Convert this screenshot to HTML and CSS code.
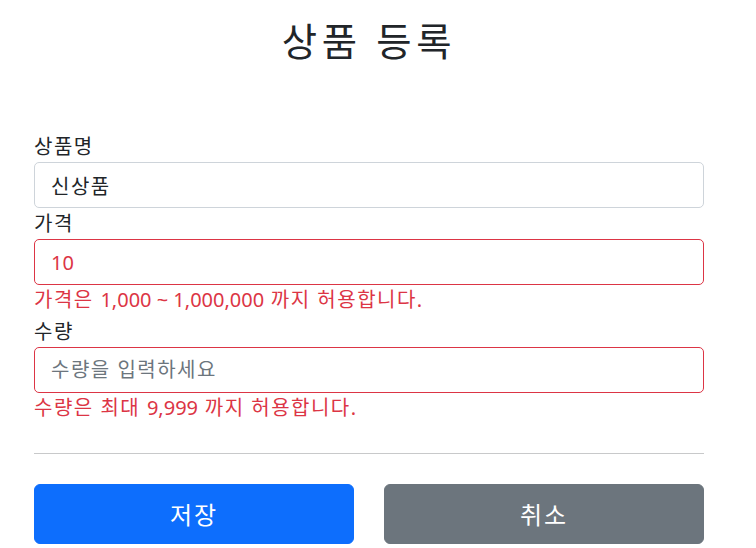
FILE: index.html
```html
<!DOCTYPE html>
<html lang="ko">
<head>
<meta charset="utf-8">
<title>상품 등록</title>
<link rel="stylesheet" href="styles.css">
</head>
<body>
<div class="container">
  <div class="header">
    <h2 class="title">상품 등록</h2>
  </div>
  <form class="form">
    <div class="field">
      <label class="label" for="itemName">상품명</label>
      <input type="text" id="itemName" class="control" value="신상품">
    </div>
    <div class="field">
      <label class="label" for="price">가격</label>
      <input type="text" id="price" class="control control-error control-number" value="10">
      <div class="field-error">가격은 <span class="num">1,000 ~ 1,000,000</span> 까지 허용합니다.</div>
    </div>
    <div class="field">
      <label class="label" for="quantity">수량</label>
      <input type="text" id="quantity" class="control control-error" placeholder="수량을 입력하세요">
      <div class="field-error">수량은 최대 <span class="num">9,999</span> 까지 허용합니다.</div>
    </div>
    <hr class="divider">
    <div class="actions">
      <button type="submit" class="btn btn-primary">저장</button>
      <button type="button" class="btn btn-secondary">취소</button>
    </div>
  </form>
</div>
</body>
</html>
```
FILE: styles.css
```css
html, body {
  margin: 0;
  padding: 0;
  background: #ffffff;
}
body {
  font-family: "Noto Sans", "Noto Sans CJK KR", sans-serif;
  font-size: 20px;
  color: #212529;
  letter-spacing: 1.5px;
}
.container {
  width: 670px;
  margin: 0 0 0 34px;
}
.header {
  padding: 18px 0 57.6px;
  text-align: center;
}
.title {
  margin: 0 0 9.6px;
  font-size: 38.4px;
  line-height: 46px;
  font-weight: 400;
  letter-spacing: 4.6px;
  color: #212529;
}
.form {
  display: flex;
  flex-direction: column;
}
.field {
  display: flex;
  flex-direction: column;
}
.label {
  display: block;
  line-height: 31px;
  height: 31px;
}
.control {
  box-sizing: border-box;
  width: 100%;
  height: 46px;
  margin: 0;
  padding: 0 16px;
  font-family: inherit;
  font-size: 20px;
  letter-spacing: 1.5px;
  color: #212529;
  background: #ffffff;
  border: 1px solid #ced4da;
  border-radius: 5px;
  outline: none;
}
.control-error {
  border-color: #dc3545;
  color: #dc3545;
}
.control-number {
  letter-spacing: 0;
}
.control::placeholder {
  color: #6c757d;
  opacity: 1;
}
.field-error {
  color: #dc3545;
  line-height: 30.5px;
  height: 30.5px;
}
.num {
  letter-spacing: 0;
}
.divider {
  margin: 30.3px 0 29.7px;
  border: 0;
  border-top: 1px solid #c8c9ca;
  height: 0;
}
.actions {
  display: grid;
  grid-template-columns: 1fr 1fr;
  column-gap: 30px;
}
.btn {
  height: 59.5px;
  font-family: inherit;
  font-size: 24px;
  letter-spacing: 2px;
  color: #ffffff;
  border: 1px solid transparent;
  border-radius: 6px;
  padding: 0;
}
.btn-primary {
  background: #0d6efd;
  border-color: #0d6efd;
}
.btn-secondary {
  background: #6c757d;
  border-color: #6c757d;
}
```
